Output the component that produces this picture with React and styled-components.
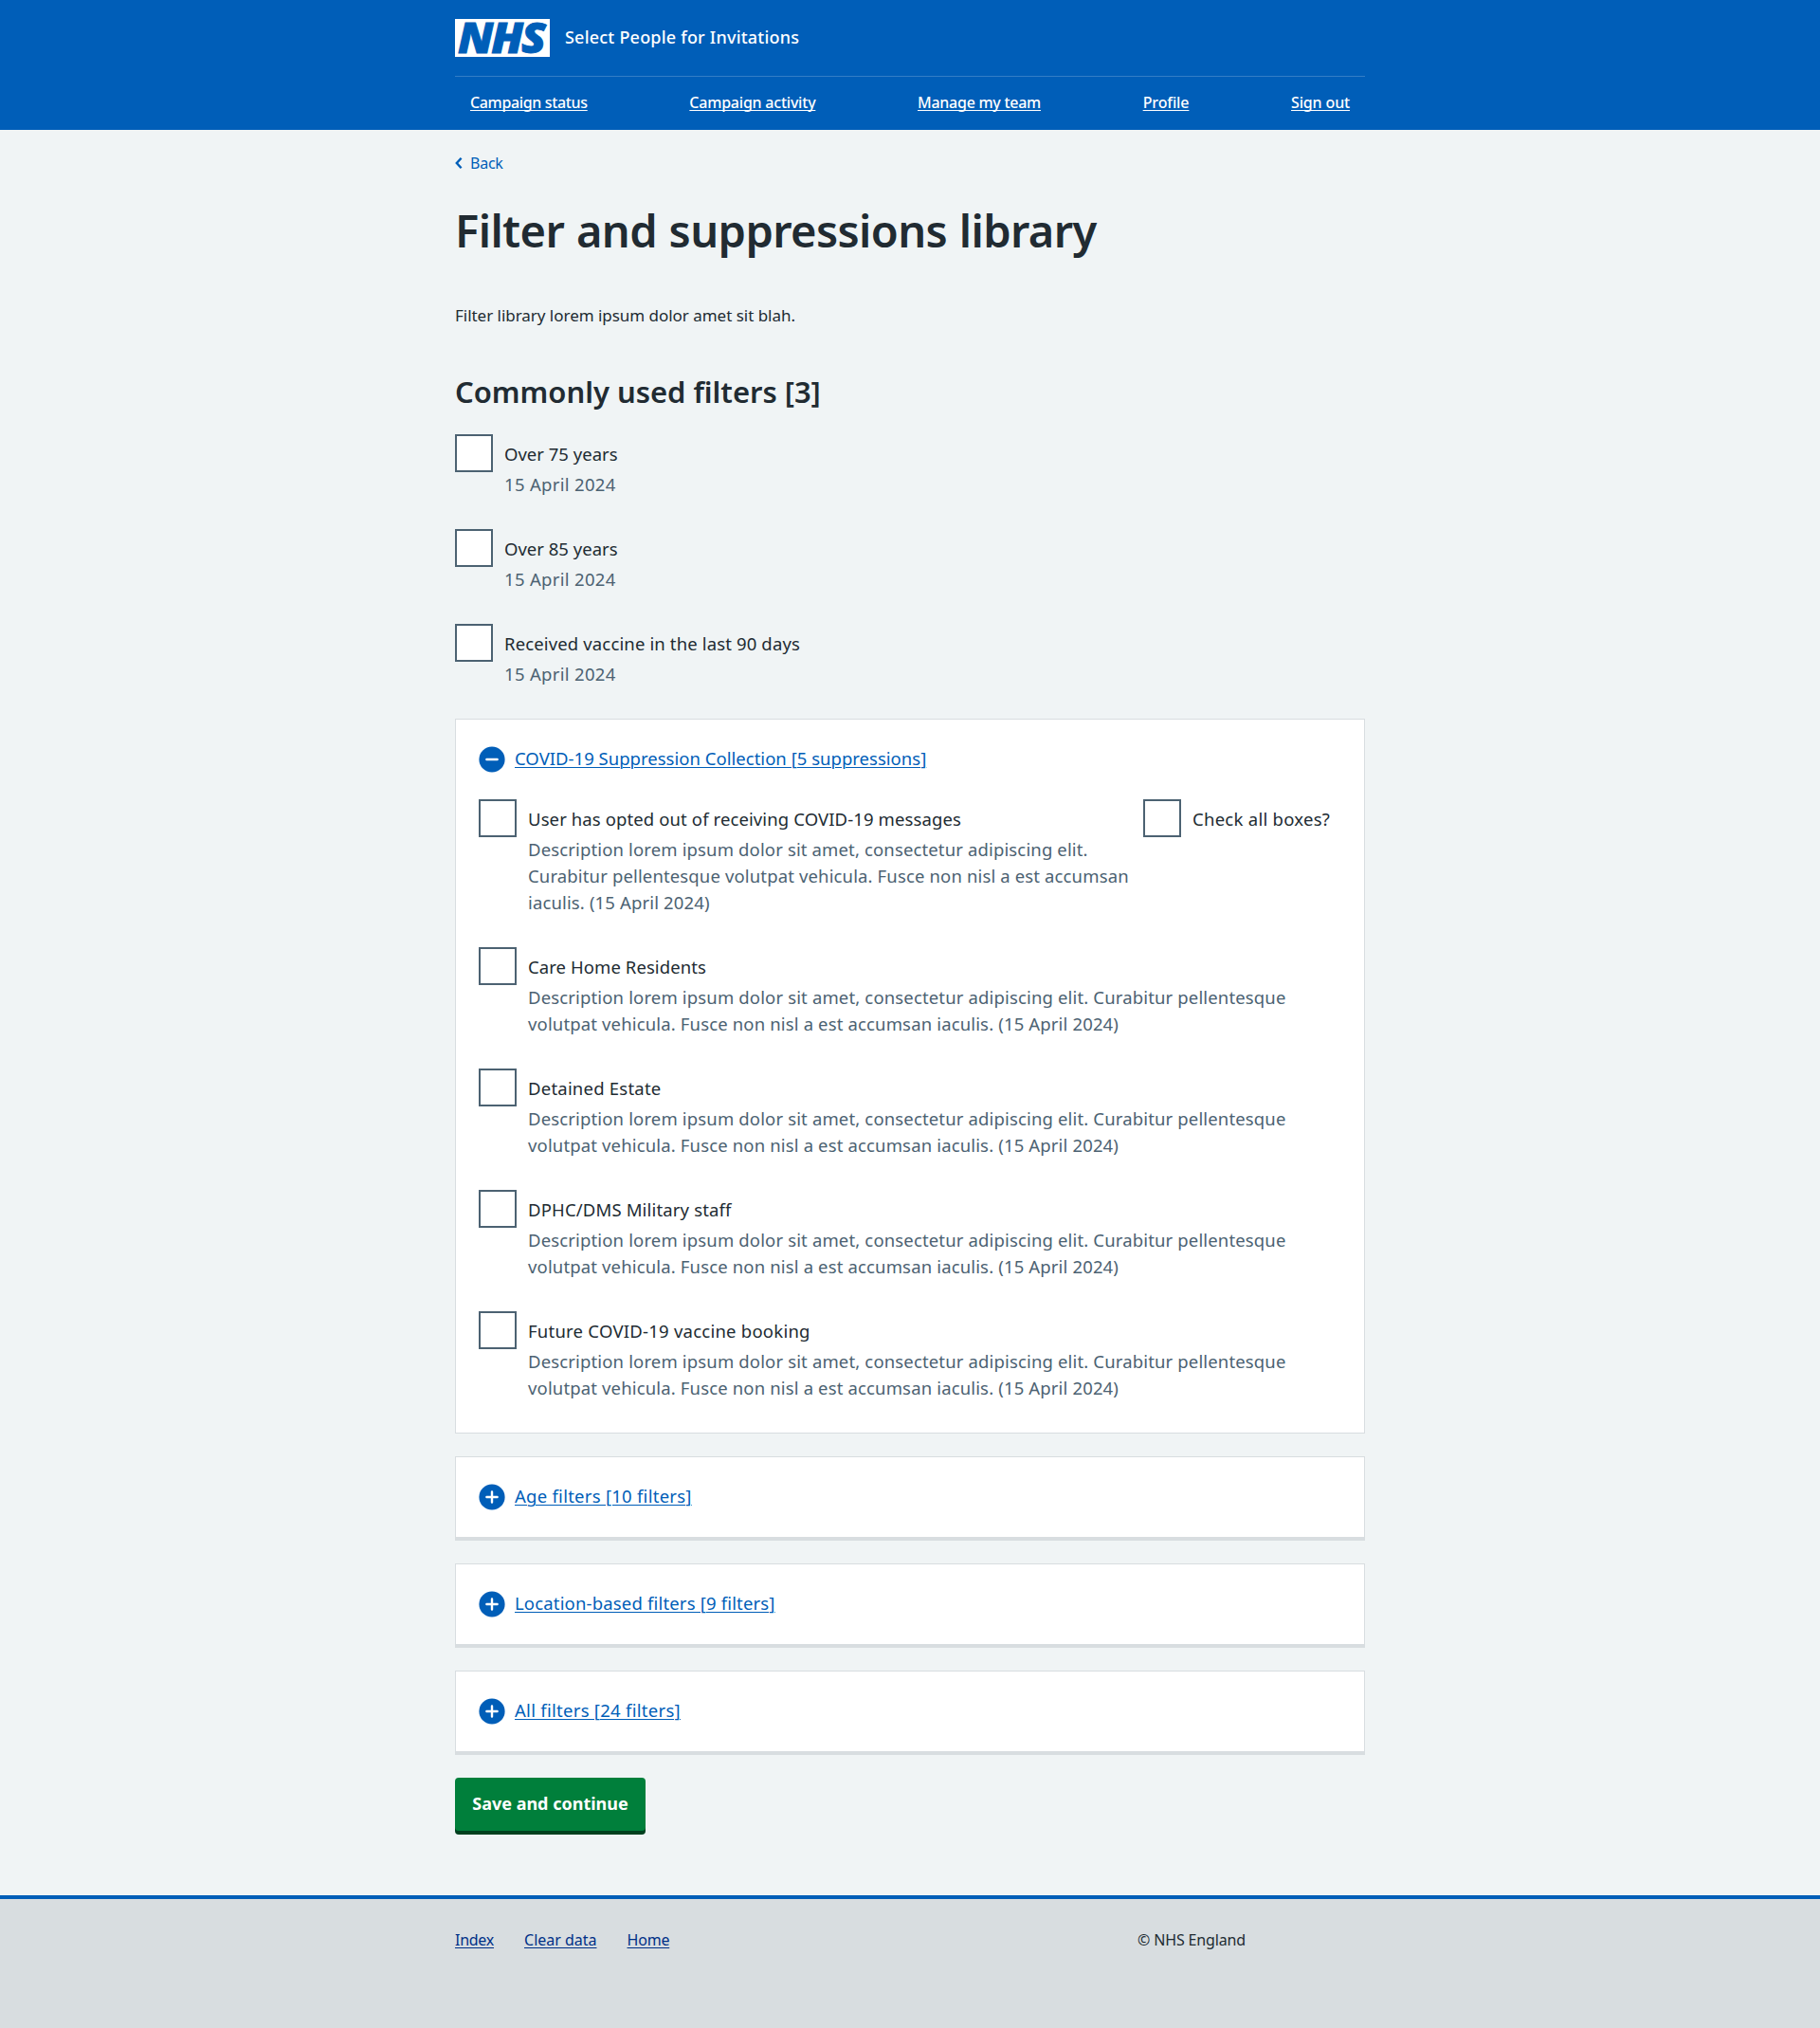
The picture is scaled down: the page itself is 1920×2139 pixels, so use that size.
import React from "react";
import styled, { createGlobalStyle } from "styled-components";

const color = {
  blue: "#005eb8",
  darkBlue: "#003087",
  text: "#212b32",
  secondary: "#4c6272",
  border: "#d8dde0",
  page: "#f0f4f5",
  green: "#007f3b",
  darkGreen: "#00401e",
};

const GlobalStyle = createGlobalStyle`
  *, *::before, *::after { box-sizing: border-box; }
  body {
    margin: 0;
    background: ${color.page};
    color: ${color.text};
    font-family: "Noto Sans", "Open Sans", sans-serif;
    font-size: 18.5px;
    line-height: 28px;
    font-kerning: normal;
  }
`;

const Page = styled.div`
  display: flex;
  flex-direction: column;
  min-height: 2139px;
`;

const Container = styled.div`
  width: 960px;
  margin: 0 auto;
`;

const Tracked = styled.span`
  letter-spacing: ${(p) => p.$track || 0}px;
`;

/* Header */
const Header = styled.header`
  height: 137px;
  background: ${color.blue};
  color: #fff;
`;

const Brand = styled.div`
  display: flex;
  align-items: center;
  gap: 16px;
  height: 80px;
`;

const Logo = styled.svg`
  display: block;
  width: 100px;
  height: 40px;
  overflow: visible;
`;

const LogoText = styled.text`
  font-family: "Noto Sans", "Open Sans", sans-serif;
  font-size: 44.5px;
  font-weight: 900;
  font-style: italic;
  letter-spacing: -2px;
  fill: ${color.blue};
  stroke: ${color.blue};
  stroke-width: 0.9px;
`;

const ServiceName = styled.span`
  font-size: 18px;
  font-weight: 500;
  line-height: 24px;
  letter-spacing: 0.22px;
  padding-bottom: 2px;
`;

const Nav = styled.nav`
  display: flex;
  justify-content: space-between;
  height: 57px;
  padding: 15px 16px 0;
  border-top: 1px solid rgba(255, 255, 255, 0.2);
`;

const NavLink = styled.a`
  color: #fff;
  font-size: 16px;
  font-weight: 500;
  line-height: 24px;
  letter-spacing: ${(p) => p.$track}px;
  text-decoration: underline;
  text-underline-offset: 2px;
  text-decoration-thickness: 1px;
  text-decoration-skip-ink: none;
`;

/* Main */
const Main = styled.main`
  flex: 1;
`;

const BackLink = styled.a`
  display: flex;
  align-items: center;
  gap: 8px;
  margin-top: 23px;
  width: max-content;
  color: ${color.blue};
  font-size: 16px;
  line-height: 24px;
`;

const Title = styled.h1`
  margin: 31px 0 0;
  font-size: 47px;
  line-height: 56px;
  font-weight: 600;
  letter-spacing: -0.6px;
  word-spacing: 1px;
`;

const Intro = styled.p`
  margin: 48px 0 0;
  font-size: 17px;
  line-height: 28px;
  letter-spacing: -0.03px;
`;

const SectionTitle = styled.h2`
  margin: 46px 0 25px;
  font-size: 31px;
  line-height: 40px;
  font-weight: 600;
  letter-spacing: -0.03px;
`;

const CheckList = styled.div`
  display: flex;
  flex-direction: column;
  gap: 32px;
`;

const CheckRow = styled.div`
  display: grid;
  grid-template-columns: 40px 1fr;
  column-gap: 12px;
  align-items: start;
`;

const Checkbox = styled.input`
  appearance: none;
  width: 40px;
  height: 40px;
  margin: 0;
  border: 2px solid ${color.secondary};
  border-radius: 0;
  background: #fff;
`;

const CheckText = styled.div`
  display: flex;
  flex-direction: column;
`;

const Label = styled.label`
  padding-top: 2px;
  line-height: 38px;
  white-space: nowrap;
  letter-spacing: ${(p) => p.$track || 0}px;
`;

const Hint = styled.span`
  margin: -1px 0 1px;
  color: ${color.secondary};
  line-height: 28px;
  letter-spacing: ${(p) => p.$track || 0}px;
`;

const Cards = styled.div`
  display: flex;
  flex-direction: column;
  gap: 24px;
  margin: 32px 0 24px;
`;

const Card = styled.section`
  padding: 24px;
  background: #fff;
  border: 1px solid ${color.border};
  border-bottom-width: ${(p) => (p.$open ? 1 : 4)}px;
  padding-bottom: ${(p) => (p.$open ? 32 : 24)}px;
`;

const CardToggle = styled.a`
  display: flex;
  align-items: center;
  gap: 10px;
  height: 36px;
  color: ${color.blue};
`;

const ToggleIcon = styled.svg`
  display: block;
  width: 28px;
  height: 28px;
`;

const ToggleText = styled.span`
  padding-bottom: 2px;
  text-decoration: underline;
  text-decoration-thickness: 1px;
  text-underline-offset: 2px;
  letter-spacing: ${(p) => p.$track || 0}px;
`;

const CardBody = styled.div`
  display: flex;
  flex-direction: column;
  gap: 32px;
  margin-top: 24px;
`;

const SplitRow = styled.div`
  display: grid;
  grid-template-columns: 701px 1fr;
`;

const SplitMain = styled.div`
  padding-right: 8px;
`;

const SaveButton = styled.button`
  display: block;
  width: 201px;
  height: 56px;
  margin: 0 0 68px;
  padding: 0 0 2px;
  border: 0;
  border-radius: 4px;
  background: ${color.green};
  box-shadow: 0 4px 0 ${color.darkGreen};
  color: #fff;
  font: 700 18px/28px "Noto Sans", "Open Sans", sans-serif;
  letter-spacing: 0;
`;

/* Footer */
const Footer = styled.footer`
  height: 140px;
  padding-top: 31px;
  background: ${color.border};
  border-top: 4px solid ${color.blue};
  font-size: 16px;
  line-height: 24px;
`;

const FooterGrid = styled(Container)`
  display: grid;
  grid-template-columns: 720px 240px;
`;

const FooterLinks = styled.div`
  display: flex;
  gap: 32px;
`;

const FooterLink = styled.a`
  color: ${color.darkBlue};
  text-decoration: underline;
  text-decoration-thickness: 1px;
  text-underline-offset: 2px;
  letter-spacing: ${(p) => p.$track || 0}px;
`;

const NAV = [
  ["Campaign status", -0.35],
  ["Campaign activity", -0.22],
  ["Manage my team", -0.26],
  ["Profile", -0.11],
  ["Sign out", -0.15],
];

const COMMON = [
  ["Over 75 years", 0.01],
  ["Over 85 years", 0.01],
  ["Received vaccine in the last 90 days", 0.14],
];

const DESCRIPTION =
  "Description lorem ipsum dolor sit amet, consectetur adipiscing elit. Curabitur pellentesque volutpat vehicula. Fusce non nisl a est accumsan iaculis. (15 April 2024)";

const SUPPRESSIONS = [
  ["Care Home Residents", 0.08],
  ["Detained Estate", 0.22],
  ["DPHC/DMS Military staff", 0.16],
  ["Future COVID-19 vaccine booking", 0.24],
];

const COLLAPSED = [
  ["Age filters [10 filters]", 0.26],
  ["Location-based filters [9 filters]", 0.17],
  ["All filters [24 filters]", 0.28],
];

const FOOTER_LINKS = [
  ["Index", -0.26],
  ["Clear data", -0.01],
  ["Home", -0.21],
];

function NhsLogo() {
  return (
    <Logo viewBox="0 0 100 40" role="img" aria-label="NHS">
      <rect width="100" height="40" fill="#fff" />
      <LogoText x="3" y="35.8" textLength="91" lengthAdjust="spacingAndGlyphs">
        NHS
      </LogoText>
    </Logo>
  );
}

function Toggle({ open, track, children }) {
  return (
    <CardToggle>
      <ToggleIcon viewBox="0 0 28 28">
        <circle cx="14" cy="14" r="13.6" fill={color.blue} />
        <path
          d={open ? "M8.4 14h11.2" : "M8.4 14h11.2M14 8.4v11.2"}
          stroke="#fff"
          strokeWidth="2.4"
          strokeLinecap="round"
        />
      </ToggleIcon>
      <ToggleText $track={track}>{children}</ToggleText>
    </CardToggle>
  );
}

function CheckItem({ label, track, hint, hintTrack }) {
  return (
    <CheckRow>
      <Checkbox type="checkbox" aria-label={label} />
      <CheckText>
        <Label $track={track}>{label}</Label>
        {hint && <Hint $track={hintTrack}>{hint}</Hint>}
      </CheckText>
    </CheckRow>
  );
}

export default function App() {
  return (
    <Page>
      <GlobalStyle />
      <Header>
        <Container>
          <Brand>
            <NhsLogo />
            <ServiceName>Select People for Invitations</ServiceName>
          </Brand>
          <Nav>
            {NAV.map(([name, track]) => (
              <NavLink key={name} $track={track}>
                {name}
              </NavLink>
            ))}
          </Nav>
        </Container>
      </Header>

      <Main>
        <Container>
          <BackLink>
            <svg width="8" height="14" viewBox="0 0 8 14">
              <path
                d="M6.6 1.8 1.8 7l4.8 5.2"
                fill="none"
                stroke={color.blue}
                strokeWidth="2.4"
              />
            </svg>
            <Tracked $track={-0.25}>Back</Tracked>
          </BackLink>
          <Title>Filter and suppressions library</Title>
          <Intro>Filter library lorem ipsum dolor amet sit blah.</Intro>
          <SectionTitle>Commonly used filters [3]</SectionTitle>

          <CheckList>
            {COMMON.map(([label, track]) => (
              <CheckItem
                key={label}
                label={label}
                track={track}
                hint="15 April 2024"
                hintTrack={0.32}
              />
            ))}
          </CheckList>

          <Cards>
            <Card $open>
              <Toggle open track={0.02}>
                COVID-19 Suppression Collection [5 suppressions]
              </Toggle>
              <CardBody>
                <SplitRow>
                  <SplitMain>
                    <CheckItem
                      label="User has opted out of receiving COVID-19 messages"
                      track={0.11}
                      hint={DESCRIPTION}
                      hintTrack={0.14}
                    />
                  </SplitMain>
                  <CheckItem label="Check all boxes?" track={0.27} />
                </SplitRow>
                {SUPPRESSIONS.map(([label, track]) => (
                  <CheckItem
                    key={label}
                    label={label}
                    track={track}
                    hint={DESCRIPTION}
                    hintTrack={0.15}
                  />
                ))}
              </CardBody>
            </Card>
            {COLLAPSED.map(([name, track]) => (
              <Card key={name}>
                <Toggle track={track}>{name}</Toggle>
              </Card>
            ))}
          </Cards>

          <SaveButton type="button">Save and continue</SaveButton>
        </Container>
      </Main>

      <Footer>
        <FooterGrid>
          <FooterLinks>
            {FOOTER_LINKS.map(([name, track]) => (
              <FooterLink key={name} $track={track}>
                {name}
              </FooterLink>
            ))}
          </FooterLinks>
          <Tracked $track={-0.15}>© NHS England</Tracked>
        </FooterGrid>
      </Footer>
    </Page>
  );
}
